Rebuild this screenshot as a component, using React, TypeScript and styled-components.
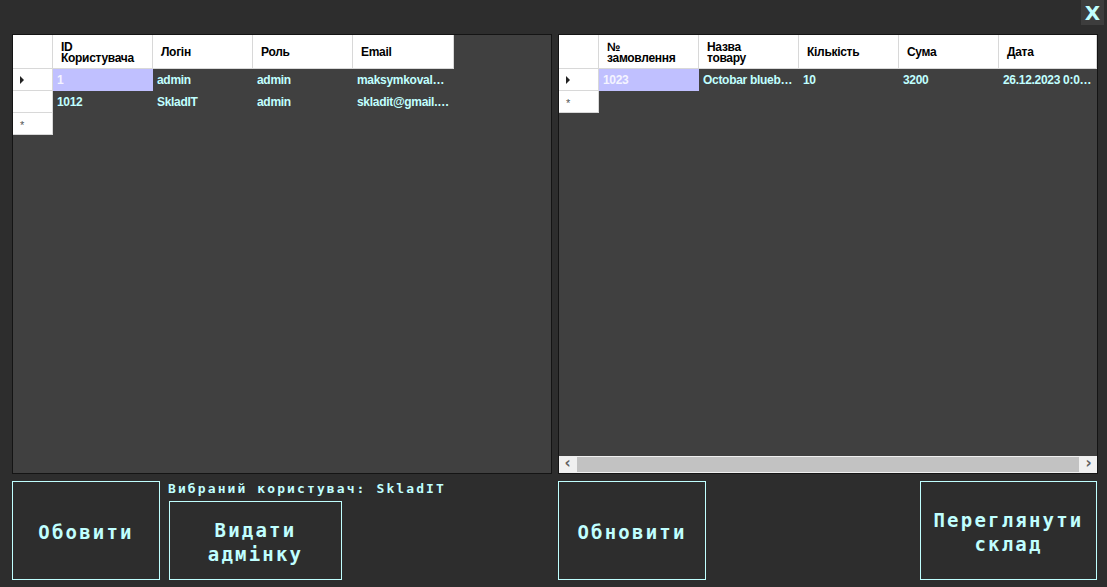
import styled, { createGlobalStyle } from 'styled-components';

const GlobalStyle = createGlobalStyle`
  html, body {
    margin: 0;
    padding: 0;
    background: #2d2d2d;
  }
  #root {
    width: 1107px;
    height: 587px;
    overflow: hidden;
  }
`;

const CYAN = '#c0ffff';

type Column = { title: string; width: number };
type Row = { cells: string[]; current?: boolean };

const userColumns: Column[] = [
  { title: 'ID\nКористувача', width: 100 },
  { title: 'Логін', width: 100 },
  { title: 'Роль', width: 100 },
  { title: 'Email', width: 101 },
];

const userRows: Row[] = [
  { cells: ['1', 'admin', 'admin', 'maksymkovalenko@gmail.com'], current: true },
  { cells: ['1012', 'SkladIT', 'admin', 'skladit@gmail.com'] },
];

const orderColumns: Column[] = [
  { title: '№\nзамовлення', width: 100 },
  { title: 'Назва\nтовару', width: 100 },
  { title: 'Кількість', width: 100 },
  { title: 'Сума', width: 100 },
  { title: 'Дата', width: 98 },
];

const orderRows: Row[] = [
  { cells: ['1023', 'Octobar blueberry', '10', '3200', '26.12.2023 0:00:00'], current: true },
];

const DataGrid = ({ columns, rows, scroll }: { columns: Column[]; rows: Row[]; scroll?: boolean }) => (
  <GridFrame>
    <GridBody>
      <HeaderRow>
        <Corner />
        {columns.map((c) => (
          <HeaderCell key={c.title} $w={c.width}>{c.title}</HeaderCell>
        ))}
      </HeaderRow>
      {rows.map((r, i) => (
        <DataRow key={i}>
          <RowHead>{r.current ? <Arrow /> : null}</RowHead>
          {r.cells.map((v, j) => (
            <Cell key={j} $w={columns[j].width} $selected={r.current && j === 0}>{v}</Cell>
          ))}
        </DataRow>
      ))}
      <DataRow>
        <RowHead><Star>*</Star></RowHead>
      </DataRow>
    </GridBody>
    {scroll && (
      <HScroll>
        <ScrollBtn>‹</ScrollBtn>
        <Thumb />
        <ScrollBtn>›</ScrollBtn>
      </HScroll>
    )}
  </GridFrame>
);

export default function App() {
  return (
    <Page>
      <GlobalStyle />
      <TopBar>
        <CloseBtn>X</CloseBtn>
      </TopBar>
      <Grids>
        <LeftPane>
          <DataGrid columns={userColumns} rows={userRows} />
        </LeftPane>
        <RightPane>
          <DataGrid columns={orderColumns} rows={orderRows} scroll />
        </RightPane>
      </Grids>
      <Bottom>
        <LeftActions>
          <ActionButton $w={148} $h={99}>Обовити</ActionButton>
          <AdminGroup>
            <SelectedLabel>Вибраний користувач: SkladIT</SelectedLabel>
            <ActionButton $w={173} $h={79}>Видати<br />адмінку</ActionButton>
          </AdminGroup>
        </LeftActions>
        <RightActions>
          <ActionButton $w={148} $h={99}>Обновити</ActionButton>
          <ActionButton $w={177} $h={99}>Переглянути<br />склад</ActionButton>
        </RightActions>
      </Bottom>
    </Page>
  );
}

const Page = styled.div`
  width: 1107px;
  height: 587px;
  display: flex;
  flex-direction: column;
  background: #2d2d2d;
  font-family: "Liberation Sans", Arial, sans-serif;
`;

const TopBar = styled.div`
  height: 34px;
  display: flex;
  justify-content: flex-end;
  align-items: flex-start;
  padding-right: 3px;
`;

const CloseBtn = styled.div`
  width: 23px;
  height: 25px;
  background: #3d3d3d;
  color: ${CYAN};
  font-family: "DejaVu Sans", sans-serif;
  font-weight: bold;
  font-size: 20px;
  display: flex;
  align-items: center;
  justify-content: center;
`;

const Grids = styled.div`
  display: flex;
  gap: 6px;
  padding-left: 12px;
  height: 440px;
`;

const LeftPane = styled.div`
  width: 540px;
`;

const RightPane = styled.div`
  width: 540px;
`;

const GridFrame = styled.div`
  height: 100%;
  box-sizing: border-box;
  border: 1px solid #141414;
  background: #404040;
  display: flex;
  flex-direction: column;
  overflow: hidden;
`;

const GridBody = styled.div`
  flex: 1;
  overflow: hidden;
`;

const HeaderRow = styled.div`
  display: flex;
  height: 34px;
  white-space: nowrap;
`;

const Corner = styled.div`
  width: 40px;
  flex: none;
  background: #fff;
  box-sizing: border-box;
  border-right: 1px solid #d8d8d8;
  border-bottom: 1px solid #d8d8d8;
`;

const HeaderCell = styled.div<{ $w: number }>`
  width: ${(p) => p.$w}px;
  flex: none;
  box-sizing: border-box;
  background: #fff;
  border-right: 1px solid #d8d8d8;
  border-bottom: 1px solid #d8d8d8;
  padding: 2px 4px 0 8px;
  display: flex;
  align-items: center;
  white-space: pre-line;
  font-size: 12px;
  font-weight: bold;
  line-height: 11px;
  color: #000;
  letter-spacing: -0.3px;
`;

const DataRow = styled.div`
  display: flex;
  height: 22px;
`;

const RowHead = styled.div`
  width: 40px;
  flex: none;
  box-sizing: border-box;
  background: #fff;
  border-right: 1px solid #d8d8d8;
  border-bottom: 1px solid #d8d8d8;
  display: flex;
  align-items: center;
  padding-left: 7px;
`;

const Arrow = styled.div`
  width: 0;
  height: 0;
  border-top: 4px solid transparent;
  border-bottom: 4px solid transparent;
  border-left: 4px solid #222;
`;

const Star = styled.span`
  font-size: 11px;
  color: #555;
  line-height: 1;
  padding-top: 4px;
`;

const Cell = styled.div<{ $w: number; $selected?: boolean }>`
  width: ${(p) => p.$w}px;
  flex: none;
  box-sizing: border-box;
  padding: 0 4px;
  background: ${(p) => (p.$selected ? '#c0c0ff' : 'transparent')};
  color: ${(p) => (p.$selected ? '#f4f4ff' : CYAN)};
  font-size: 12px;
  font-weight: bold;
  letter-spacing: -0.3px;
  line-height: 22px;
  white-space: nowrap;
  overflow: hidden;
  text-overflow: ellipsis;
`;

const HScroll = styled.div`
  height: 17px;
  flex: none;
  background: #f0f0f0;
  display: flex;
  align-items: center;
`;

const ScrollBtn = styled.div`
  width: 17px;
  height: 17px;
  flex: none;
  display: flex;
  align-items: center;
  justify-content: center;
  font-family: "DejaVu Sans", sans-serif;
  font-weight: bold;
  font-size: 15px;
  color: #606060;
  line-height: 1;
  padding-bottom: 2px;
  box-sizing: border-box;
`;

const Thumb = styled.div`
  flex: 1;
  height: 15px;
  background: #c2c2c2;
  margin: 0 1px;
`;

const Bottom = styled.div`
  display: flex;
  padding: 7px 0 0 12px;
`;

const LeftActions = styled.div`
  display: flex;
  gap: 9px;
  width: 546px;
  flex: none;
`;

const AdminGroup = styled.div`
  display: flex;
  flex-direction: column;
  gap: 4px;
  width: 173px;
  flex: none;
`;

const SelectedLabel = styled.div`
  height: 16px;
  color: ${CYAN};
  font-family: "DejaVu Sans Mono", monospace;
  font-weight: bold;
  font-size: 13px;
  letter-spacing: 2.1px;
  white-space: nowrap;
  margin-left: -1px;
  line-height: 16px;
`;

const RightActions = styled.div`
  display: flex;
  justify-content: space-between;
  width: 539px;
  flex: none;
`;

const ActionButton = styled.div<{ $w: number; $h: number }>`
  width: ${(p) => p.$w}px;
  height: ${(p) => p.$h}px;
  flex: none;
  box-sizing: border-box;
  border: 1px solid ${CYAN};
  background: #2d2d2d;
  color: ${CYAN};
  font-family: "DejaVu Sans Mono", monospace;
  font-weight: bold;
  font-size: 19px;
  letter-spacing: 2.2px;
  line-height: 24px;
  display: flex;
  align-items: center;
  justify-content: center;
  text-align: center;
  padding-top: 2px;
`;
